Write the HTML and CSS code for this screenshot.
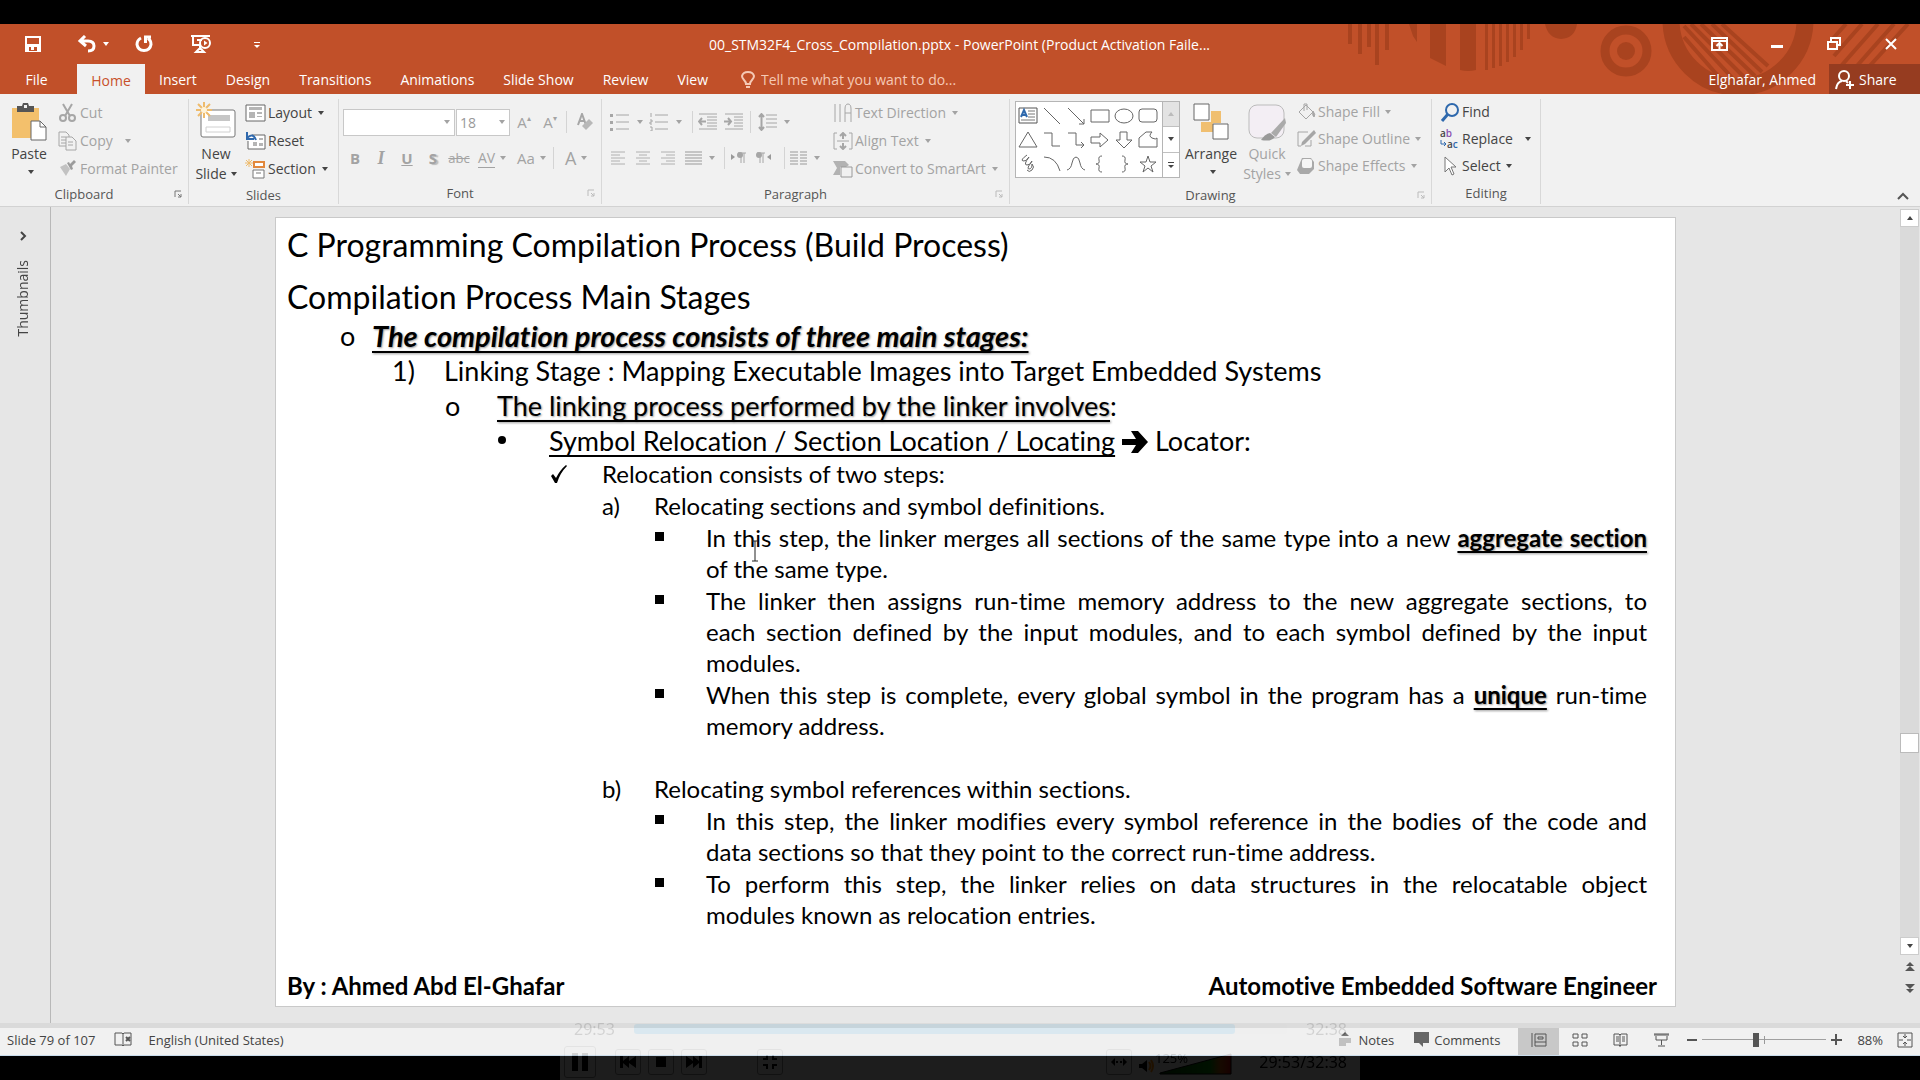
FILE: index.html
```html
<!DOCTYPE html>
<html lang="en">
<head>
<meta charset="utf-8">
<title>00_STM32F4_Cross_Compilation.pptx - PowerPoint</title>
<link rel="stylesheet" href="styles.css">
</head>
<body>
<header class="app-head">
  <svg class="deco" width="580" height="70" viewBox="1340 24 580 70" aria-hidden="true">
    <g fill="#a9431f">
      <path d="M1348 24h4v20h-4zM1358 24h4v30h-4zM1367 24h4v23h-4zM1375 24h4v41h-4zM1385 24h4v26h-4zM1409 24h8v18l-4-6zM1430 24h16v42l-16-8zM1460 24h16v46q-8 2-16 0z"/>
      <path d="M1485 24h3v46h-3zM1492 24h3v44h-3zM1499 24h3v42h-3zM1506 24h3v38h-3zM1513 24h3v33h-3zM1520 24h3v26h-3zM1527 24h3v15h-3z"/>
      <path d="M1545 24h32q-2 14-16 15-13-1-16-15z"/>
    </g>
    <circle cx="1626" cy="51" r="21" fill="none" stroke="#a9431f" stroke-width="9"/>
    <circle cx="1626" cy="51" r="9" fill="#a9431f"/>
    <circle cx="1738" cy="20" r="67" fill="none" stroke="#a9431f" stroke-width="17"/>
    <g stroke="#a9431f" stroke-width="4" fill="none">
      <path d="M1684 37l42 48M1684 26l54 58M1691 24l56 56M1701 24l54 52M1712 24l50 48M1722 24l46 42"/>
      <path d="M1846 24l-18 20M1862 24l-28 32M1878 24l-44 50M1894 24l-46 52M1908 24l-42 46"/>
    </g>
  </svg>
  <div class="title-bar">
    <div class="quick">
      <button class="qa q-save" aria-label="Save"><svg width="18" height="18" viewBox="0 0 18 18"><path d="M1 1h16v16H1z" fill="#fff"/><path d="M3 3h12v6H3zM5 12h8v4H5z" fill="#c15029"/><path d="M7 12h3v3H7z" fill="#fff"/></svg></button>
      <button class="qa q-undo" aria-label="Undo"><svg width="20" height="18" viewBox="0 0 20 18" fill="none" stroke="#fff" stroke-width="3"><path d="M8 1L3 6l6 5M3 6h8q6 0 6 5t-6 5"/></svg><i class="caret"></i></button>
      <button class="qa q-redo" aria-label="Repeat"><svg width="18" height="18" viewBox="0 0 18 18" fill="none" stroke="#fff" stroke-width="3"><path d="M6 3Q2 5 2 9.500q1 6 7 6t7-6q0-4-3-6.500"/><path d="M16 2h-5.500v6"/></svg></button>
      <button class="qa q-show" aria-label="Start from beginning"><svg width="22" height="20" viewBox="0 0 22 20" fill="none" stroke="#fff" stroke-width="2"><path d="M1 2h19M3 3v8h7M7 6h5M10 11v4M6 18l4-4 4 4z"/><circle cx="15" cy="9" r="5"/><path d="M14 6.500v5l3.500-2.500z" fill="#fff" stroke="none"/></svg></button>
      <button class="qa q-more" aria-label="Customize"><i class="caret line"></i></button>
    </div>
    <div class="doc-title">00_STM32F4_Cross_Compilation.pptx - PowerPoint (Product Activation Faile...</div>
    <div class="win">
      <button aria-label="Ribbon display options"><svg width="17" height="14" viewBox="0 0 17 14" fill="none" stroke="#fff" stroke-width="2"><path d="M1 1h15v12H1zM1 4h15M8.500 12V6M5.500 9l3-3 3 3"/></svg></button>
      <button aria-label="Minimize"><svg width="14" height="14" viewBox="0 0 14 14"><path d="M1 8h12v3H1z" fill="#fff"/></svg></button>
      <button aria-label="Restore"><svg width="14" height="14" viewBox="0 0 14 14" fill="none" stroke="#fff" stroke-width="2"><path d="M1 5h9v7H1zM4 4V1h9v7h-3"/></svg></button>
      <button aria-label="Close"><svg width="14" height="14" viewBox="0 0 14 14" stroke="#fff" stroke-width="2"><path d="M2 2l10 10M12 2L2 12"/></svg></button>
    </div>
  </div>
  <nav class="tabs">
    <button class="tab file">File</button>
    <button class="tab active">Home</button>
    <button class="tab">Insert</button>
    <button class="tab">Design</button>
    <button class="tab">Transitions</button>
    <button class="tab">Animations</button>
    <button class="tab">Slide Show</button>
    <button class="tab">Review</button>
    <button class="tab">View</button>
    <label class="tell"><svg width="14" height="18" viewBox="0 0 14 18" fill="none" stroke="#f5c9b5" stroke-width="2"><path d="M5 13q0-2-2-4-2-2-2-4 1-4 6-4t6 4q0 2-2 4t-2 4zM5 16h4"/></svg><input type="text" aria-label="Tell me" placeholder="Tell me what you want to do..."></label>
    <span class="account">Elghafar, Ahmed</span>
    <button class="share"><svg width="20" height="20" viewBox="0 0 20 20" fill="none" stroke="#fff" stroke-width="2"><circle cx="9" cy="6" r="5"/><path d="M1 19q1-7 6-8M11 11l2 2M15 11v8M11 15h8"/></svg>Share</button>
  </nav>
</header>

<section class="ribbon">
  <div class="group g-clip">
    <div class="body">
      <button class="big b-paste"><svg width="36" height="40" viewBox="0 0 36 40"><path d="M1 6h27v30H1z" fill="#f3c06c"/><path d="M6 4h5l1-3h5l1 3h5v6H6z" fill="#555"/><path d="M13 3h3v3h-3z" fill="#f1f1f1"/><path d="M20 19h9l6 6v13H20z" fill="#fff" stroke="#666"/><path d="M29 19v6h6" fill="none" stroke="#666"/></svg><span>Paste</span><i class="caret"></i></button>
      <div class="stack off">
        <button class="item"><svg width="20" height="20" viewBox="0 0 20 20" fill="none" stroke="#a6a6a6" stroke-width="2"><path d="M5 1l7 12M14 1L7 13"/><circle cx="5" cy="15" r="3"/><circle cx="14" cy="15" r="3"/></svg><span>Cut</span></button>
        <button class="item"><svg width="20" height="20" viewBox="0 0 20 20" fill="#f1f1f1" stroke="#a6a6a6" stroke-width="1"><path d="M1 1h7l3 3v11H1zM3 6h5M3 9h5M3 12h5"/><path d="M8 6h6l4 4v9H8z"/><path d="M10 11h5M10 14h5" /></svg><span>Copy</span><i class="caret far"></i></button>
        <button class="item"><svg width="20" height="20" viewBox="0 0 20 20"><path d="M2 8l6-3 4 5-4 7z" fill="#c2c2c2"/><path d="M9 4l2-1 1 2 4-4 2 2-4 4 1 3-2 1z" fill="#9c9c9c"/></svg><span>Format Painter</span></button>
      </div>
    </div>
    <div class="label has-launch">Clipboard<svg class="launch" width="8" height="8" viewBox="0 0 8 8"><use href="#launch"/></svg></div>
  </div>

  <div class="group g-slides">
    <div class="body">
      <button class="big b-new"><svg width="40" height="40" viewBox="0 0 40 40"><rect x="5" y="8" width="34" height="27" rx="2" fill="#fff" stroke="#777"/><path d="M12 13h22v6H12z" fill="#c6c6c6"/><path d="M10 25h24v5H10z" fill="none" stroke="#d0d0d0"/><path d="M8 0v16M0 8h16M2 2l12 12M14 2L2 14" stroke="#eebb6c" stroke-width="2"/><circle cx="8" cy="8" r="3" fill="#fff3d8"/></svg><span>New</span><span>Slide<i class="caret"></i></span></button>
      <div class="stack">
        <button class="item"><svg width="21" height="18" viewBox="0 0 21 18"><path d="M1 1h19v16H1z" fill="#fff" stroke="#666"/><path d="M4 3h13v3H4zM4 8h6v6H4zM12 8h5v2h-5zM12 12h5v1h-5z" fill="#b5b5b5"/></svg><span>Layout</span><i class="caret"></i></button>
        <button class="item"><svg width="21" height="18" viewBox="0 0 21 18"><path d="M7 3h13v14H3V9" fill="#fff" stroke="#666"/><path d="M8 10h4v4H8zM14 6h4v2h-4zM14 11h4v3h-4z" fill="#b5b5b5"/><path d="M2 0v7h7M2 6q6-6 9 2" fill="none" stroke="#2f69ad" stroke-width="2"/></svg><span>Reset</span></button>
        <button class="item"><svg width="21" height="20" viewBox="0 0 21 20"><path d="M9 3h10v5H9z" fill="#fff" stroke="#e2883c" stroke-width="2"/><path d="M8 11h11v8H8zM11 14h5" fill="#fff" stroke="#777"/><path d="M4 0v8M0 4h8M1 1l6 6M7 1L1 7" stroke="#eebb6c"/></svg><span>Section</span><i class="caret"></i></button>
      </div>
    </div>
    <div class="label">Slides</div>
  </div>

  <div class="group g-font off">
    <div class="body two">
      <div class="tools">
        <span class="combo font-name"><input type="text" aria-label="Font"><i class="caret"></i></span>
        <span class="combo font-size"><input type="text" aria-label="Font size" value="18"><i class="caret"></i></span>
        <button class="t c" aria-label="Grow font">A<sup>▴</sup></button>
        <button class="t c" aria-label="Shrink font">A<sup>▾</sup></button>
        <i class="bar"></i>
        <button class="t c" aria-label="Clear formatting"><svg width="17" height="18" viewBox="0 0 17 18"><path d="M1 12L5 1l4 11M3 8h5" fill="none" stroke="#a6a6a6" stroke-width="2"/><path d="M12 6l4 4-7 7-4-4z" fill="#b8b8b8"/></svg></button>
      </div>
      <div class="tools">
        <button class="t c"><b>B</b></button><button class="t c"><em>I</em></button><button class="t c"><b><u>U</u></b></button><button class="t c"><b class="sh">S</b></button><button class="t c"><s>abc</s></button>
        <button class="t cc av"><span>AV</span><i class="caret"></i></button><button class="t cc"><span>Aa</span><i class="caret"></i></button>
        <i class="bar"></i>
        <button class="t cc big-a"><span>A</span><i class="caret"></i></button>
      </div>
    </div>
    <div class="label has-launch">Font<svg class="launch" width="8" height="8" viewBox="0 0 8 8"><use href="#launch"/></svg></div>
  </div>

  <div class="group g-para off">
    <div class="body">
      <div class="para-tools">
        <div class="tools">
          <button class="t w" aria-label="Bullets"><svg width="20" height="18" viewBox="0 0 20 18"><path d="M6 2h13M6 9h13M6 16h13" stroke="#a6a6a6"/><path d="M0 1h3v3H0zM0 8h3v3H0zM0 15h3v3H0z" fill="#a6a6a6"/></svg><i class="caret"></i></button>
          <button class="t w" aria-label="Numbering"><svg width="20" height="18" viewBox="0 0 20 18"><path d="M6 2h13M6 9h13M6 16h13M2 0v4M1 7h2v2H1v2h2M1 14h2v4H1" stroke="#a6a6a6" fill="none"/></svg><i class="caret"></i></button>
          <i class="bar"></i>
          <button class="t" aria-label="Decrease indent"><svg width="19" height="18" viewBox="0 0 19 18" fill="none" stroke="#a6a6a6"><path d="M1 1h18M9 4h10M9 7h10M9 10h10M9 13h10M1 16h18"/><path d="M8 8.500H1M4 5L1 8.500 4 12" stroke-width="2"/></svg></button>
          <button class="t" aria-label="Increase indent"><svg width="19" height="18" viewBox="0 0 19 18" fill="none" stroke="#a6a6a6"><path d="M1 1h18M10 4h9M10 7h9M10 10h9M10 13h9M1 16h18"/><path d="M0 8.500h7M4 5l3 3.500L4 12" stroke-width="2"/></svg></button>
          <i class="bar near"></i>
          <button class="t w" aria-label="Line spacing"><svg width="19" height="18" viewBox="0 0 19 18" fill="none" stroke="#a6a6a6"><path d="M8 2h11M8 6h11M8 10h11M8 14h11" stroke-width="1"/><path d="M3.500 1v16M1 4l2.500-3L6 4M1 14l2.500 3L6 14" stroke-width="2"/></svg><i class="caret"></i></button>
        </div>
        <div class="tools">
          <button class="t" aria-label="Align left"><svg width="17" height="14" viewBox="0 0 17 14"><path d="M1 1h14M1 4h9M1 7h14M1 10h9M1 13h14" stroke="#b0b0b0"/></svg></button>
          <button class="t" aria-label="Center"><svg width="17" height="14" viewBox="0 0 17 14"><path d="M1 1h14M4 4h8M1 7h14M4 10h8M1 13h14" stroke="#b0b0b0"/></svg></button>
          <button class="t" aria-label="Align right"><svg width="17" height="14" viewBox="0 0 17 14"><path d="M1 1h14M6 4h9M1 7h14M6 10h9M1 13h14" stroke="#b0b0b0"/></svg></button>
          <button class="t w" aria-label="Justify"><svg width="17" height="14" viewBox="0 0 17 14"><path d="M0 1h17M0 4h17M0 7h17M0 10h17M0 13h17" stroke="#999"/></svg><i class="caret"></i></button>
          <i class="bar short"></i>
          <button class="t" aria-label="Left to right"><svg width="17" height="12" viewBox="0 0 17 12"><path d="M1 2l4 3-4 3z" fill="#999"/><path d="M11 1v10M14 1v10M8 1h8" stroke="#a6a6a6"/><circle cx="10" cy="3" r="3" fill="#a6a6a6"/></svg></button>
          <button class="t" aria-label="Right to left"><svg width="17" height="12" viewBox="0 0 17 12"><path d="M16 2l-4 3 4 3z" fill="#999"/><path d="M5 1v10M8 1v10M2 1h8" stroke="#a6a6a6"/><circle cx="4" cy="3" r="3" fill="#a6a6a6"/></svg></button>
          <i class="bar"></i>
          <button class="t w" aria-label="Columns"><svg width="17" height="14" viewBox="0 0 17 14"><path d="M0 1h8M0 4h8M0 7h8M0 10h8M0 13h8M10 1h7M10 4h7M10 7h7M10 10h7M10 13h7" stroke="#999"/></svg><i class="caret"></i></button>
        </div>
      </div>
      <div class="stack">
        <button class="item"><svg width="20" height="20" viewBox="0 0 20 20" fill="none" stroke="#a6a6a6"><path d="M2 1v18M7 1v18M12 19V6q0-5 3-5t3 5v13M12 10h6" stroke-width="1"/></svg><span>Text Direction</span><i class="caret"></i></button>
        <button class="item"><svg width="20" height="18" viewBox="0 0 20 18" fill="none" stroke="#a6a6a6"><path d="M4 1H1v16h3M16 1h3v16h-3M4 9h12"/><path d="M10 1v6M7 4l3-3 3 3M10 17v-6M7 14l3 3 3-3" stroke-width="2"/></svg><span>Align Text</span><i class="caret"></i></button>
        <button class="item"><svg width="20" height="18" viewBox="0 0 20 18"><path d="M0 1h12l4 4-3 2H7v8H0l4-7z" fill="#b2b2b2"/><path d="M8 7h11v10H8z" fill="#f1f1f1" stroke="#999"/></svg><span>Convert to SmartArt</span><i class="caret"></i></button>
      </div>
    </div>
    <div class="label has-launch">Paragraph<svg class="launch" width="8" height="8" viewBox="0 0 8 8"><use href="#launch"/></svg></div>
  </div>

  <div class="group g-draw">
    <div class="body">
      <div class="gallery">
        <div class="shapes">
          <svg viewBox="0 0 24 24"><path d="M3 4h18v15H3z" fill="#fff" stroke="#555"/><path d="M5 13l3-7 3 7M6 11h4" fill="none" stroke="#2f69ad" stroke-width="2"/><path d="M12 7h7M12 10h7M12 13h7M5 16h14" stroke="#777"/></svg>
          <svg viewBox="0 0 24 24"><path d="M4 4l16 16"/></svg>
          <svg viewBox="0 0 24 24"><path d="M4 4l16 16M20 15v5h-5"/></svg>
          <svg viewBox="0 0 24 24"><path d="M3 6h18v12H3z"/></svg>
          <svg viewBox="0 0 24 24"><ellipse cx="12" cy="12" rx="9" ry="7"/></svg>
          <svg viewBox="0 0 24 24"><rect x="3" y="5" width="18" height="13" rx="3"/></svg>
          <svg viewBox="0 0 24 24"><path d="M12 4l9 15H3z"/></svg>
          <svg viewBox="0 0 24 24"><path d="M4 5h8v13h8"/></svg>
          <svg viewBox="0 0 24 24"><path d="M4 5h8v12h8M17 14l3 3-3 3"/></svg>
          <svg viewBox="0 0 24 24"><path d="M3 9h9V5l8 7-8 7v-4H3z"/></svg>
          <svg viewBox="0 0 24 24"><path d="M8 4h7v8h5l-8 8-8-8h4z"/></svg>
          <svg viewBox="0 0 24 24"><path d="M3 19V10l7-6h6q-4 4 0 6t5 0v9z"/></svg>
          <svg viewBox="0 0 24 24"><path d="M11 3q-7 5-4 6t6-4q-6 8-2 8t5-4q-6 8-3 8t3-5q3 3 0 6t-5 0"/></svg>
          <svg viewBox="0 0 24 24"><path d="M4 5q12 0 16 14"/></svg>
          <svg viewBox="0 0 24 24"><path d="M3 18q4-1 5-7t4-6 4 6 5 7"/></svg>
          <svg viewBox="0 0 24 24"><path d="M14 4q-4 0-3 4t-3 4q4 0 3 4t3 4"/></svg>
          <svg viewBox="0 0 24 24"><path d="M10 4q4 0 3 4t3 4q-4 0-3 4t-3 4"/></svg>
          <svg viewBox="0 0 24 24"><path d="M12 4l2 6h6l-5 4 2 6-5-4-5 4 2-6-5-4h6z"/></svg>
        </div>
        <div class="gal-scroll"><button class="dim" aria-label="Previous"><i class="caret up"></i></button><button aria-label="Next"><i class="caret"></i></button><button aria-label="More"><i class="caret line"></i></button></div>
      </div>
      <button class="big b-arr"><svg width="36" height="40" viewBox="0 0 36 40"><path d="M18 9h10v12H18zM8 20h12v10H8z" fill="#f0bf70"/><path d="M1 2h15v16H1zM20 22h15v15H20z" fill="#fff" stroke="#666"/></svg><span>Arrange</span><i class="caret"></i></button>
      <button class="big b-quick off"><svg width="38" height="40" viewBox="0 0 38 40"><rect x="1" y="3" width="35" height="33" rx="8" fill="#f3eef4" stroke="#bbb"/><path d="M37 16L23 31l5 4 10-14z" fill="#aaa"/><path d="M22 31q-5 1-9 7 10 2 14-3z" fill="#999"/></svg><span>Quick</span><span>Styles<i class="caret"></i></span></button>
      <div class="stack tight off">
        <button class="item"><svg width="20" height="18" viewBox="0 0 20 18" fill="none" stroke="#a6a6a6"><path d="M10 2l7 7-7 7-7-7zM8 8V1h3v6"/><path d="M17 8q3 4 1 6-2-1-1-6" fill="#a6a6a6"/></svg><span>Shape Fill</span><i class="caret"></i></button>
        <button class="item"><svg width="20" height="18" viewBox="0 0 20 18"><path d="M12 2H2v14h3M15 10v6H9" fill="none" stroke="#a6a6a6"/><path d="M18 0l2 3-11 11-4 2 1-4z" fill="#a6a6a6"/></svg><span>Shape Outline</span><i class="caret"></i></button>
        <button class="item"><svg width="20" height="18" viewBox="0 0 20 18"><path d="M6 1h9l3 4v7l-5 5H4l-3-4z" fill="#a9a9a9"/><rect x="6" y="2" width="10" height="9" rx="2" fill="#f6f6f6"/></svg><span>Shape Effects</span><i class="caret"></i></button>
      </div>
    </div>
    <div class="label has-launch">Drawing<svg class="launch pale" width="8" height="8" viewBox="0 0 8 8"><use href="#launch"/></svg></div>
  </div>

  <div class="group g-edit">
    <div class="body">
      <div class="stack tight">
        <button class="item"><svg width="20" height="20" viewBox="0 0 20 20" fill="none" stroke="#2f69ad" stroke-width="2"><circle cx="12" cy="8" r="6"/><path d="M8 12l-6 7" stroke-width="3"/></svg><span>Find</span></button>
        <button class="item"><span class="abac"><span>a<q>b</q></span><span class="ac"><svg width="7" height="8" viewBox="0 0 7 8"><path d="M1 0v4h5M4 2l2 2-2 2" fill="none" stroke="#2f69ad"/></svg>a<q>c</q></span></span><span>Replace</span><i class="caret far"></i></button>
        <button class="item"><svg width="20" height="20" viewBox="0 0 20 20"><path d="M5 1v15l4-4 3 7 2-1-3-7h5z" fill="#fff" stroke="#777"/></svg><span>Select</span><i class="caret"></i></button>
      </div>
    </div>
    <div class="label">Editing</div>
  </div>
  <button class="collapse" aria-label="Collapse ribbon"><svg width="12" height="8" viewBox="0 0 12 8"><path d="M1 7l5-5 5 5" fill="none" stroke="#555" stroke-width="2"/></svg></button>
</section>

<main class="work">
  <aside class="thumbs"><button aria-label="Show thumbnails"><svg width="8" height="12" viewBox="0 0 8 12"><path d="M2 2l4 4-4 4" fill="none" stroke="#444" stroke-width="2"/></svg></button><span>Thumbnails</span></aside>
  <div class="canvas">
    <article class="slide">
      <h1>C Programming Compilation Process (Build Process)</h1>
      <h1>Compilation Process Main Stages</h1>
      <div class="row big-row l1"><span class="mk ring">o</span><p class="strong shadow"><u>The compilation process consists of three main stages:</u></p></div>
      <div class="row big-row l2"><span class="mk">1)</span><p>Linking Stage : Mapping Executable Images into Target Embedded Systems</p></div>
      <div class="row big-row l3"><span class="mk ring">o</span><p><u class="shadow">The linking process performed by the linker involves</u>:</p></div>
      <div class="row big-row l4"><span class="mk dot"></span><p><u>Symbol Relocation / Section Location / Locating</u> <svg class="arrow" width="26" height="26" viewBox="0 0 26 26"><path d="M0 10h14L9 2h7l10 11-10 11H9l5-8H0z"/></svg> Locator:</p></div>
      <div class="notes">
        <div class="row l5 first"><span class="mk"><svg width="18" height="18" viewBox="0 0 18 18"><path d="M1 11l2-2 3 4Q10 5 16 0l1 1Q10 8 7 18H5z"/></svg></span><p>Relocation consists of two steps:</p></div>
        <div class="row l6"><span class="mk">a)</span><p>Relocating sections and symbol definitions.</p></div>
        <div class="row l7"><span class="mk sq"></span><p>In this step, the linker merges all sections of the same type into a new <b><u class="shadow">aggregate section</u></b> of the same type.
          <svg class="ibeam" width="8" height="22" viewBox="0 0 8 22"><path d="M1 1h6M1 21h6M4 1v20" stroke="#222" fill="none"/></svg></p></div>
        <div class="row l7"><span class="mk sq"></span><p>The linker then assigns run-time memory address to the new aggregate sections, to each&nbsp;section defined by the input modules, and to each symbol defined by the input modules.</p></div>
        <div class="row l7"><span class="mk sq"></span><p>When this step is complete, every global symbol in the program has a <b><u class="shadow">unique</u></b> run-time memory address.</p></div>
        <div class="row l6 after-gap"><span class="mk">b)</span><p>Relocating symbol references within sections.</p></div>
        <div class="row l7"><span class="mk sq"></span><p>In this step, the linker modifies every symbol reference in the bodies of the code and data&nbsp;sections so that they point to the correct run-time address.</p></div>
        <div class="row l7"><span class="mk sq"></span><p>To perform this step, the linker relies on data structures in the relocatable object modules&nbsp;known as relocation entries.</p></div>
      </div>
      <footer><span>By : Ahmed Abd El-Ghafar</span><span>Automotive Embedded Software Engineer</span></footer>
    </article>
  </div>
  <div class="scroll">
    <button class="end" aria-label="Scroll up"><i class="caret up"></i></button>
    <div class="track"><div class="thumb"></div></div>
    <button class="end" aria-label="Scroll down"><i class="caret"></i></button>
    <button aria-label="Previous slide"><svg width="10" height="10" viewBox="0 0 10 10"><path d="M5 0l4 4H1zM5 4l5 5H0z" fill="#555"/></svg></button>
    <button aria-label="Next slide"><svg width="10" height="10" viewBox="0 0 10 10"><path d="M5 10L1 6h8zM5 6L0 1h10z" fill="#555"/></svg></button>
  </div>
</main>

<footer class="status">
  <span class="s-slide">Slide 79 of 107</span>
  <button class="s-spell" aria-label="Spelling"><svg width="18" height="15" viewBox="0 0 18 15" fill="none" stroke="#555"><path d="M1 1h7l1 1 1-1h7v12h-7l-1 1-1-1H1zM9 2v12"/><path d="M12 5l4 4M16 5l-4 4" stroke-width="2"/></svg></button>
  <span>English (United States)</span>
  <div class="s-right">
    <button class="s-notes"><svg width="14" height="15" viewBox="0 0 14 15"><path d="M7 0l4 4H3z" fill="#666"/><path d="M1 6h12v5H8v3H1z" fill="#bbb"/></svg>Notes</button>
    <button class="s-comm"><svg width="15" height="15" viewBox="0 0 15 15"><path d="M0 0h15v11H9v4l-4-4H0z" fill="#666"/></svg>Comments</button>
    <button class="view on" aria-label="Normal"><svg width="16" height="14" viewBox="0 0 16 14" fill="none" stroke="#555"><path d="M1 0v14M4 1h11v12H4M4 1v12M4 9h11M7 4h5v2H7z"/></svg></button>
    <button class="view" aria-label="Slide sorter"><svg width="16" height="14" viewBox="0 0 16 14" fill="none" stroke="#555"><path d="M1 1h5v4H1zM10 1h5v4h-5zM1 9h5v4H1zM10 9h5v4h-5z"/></svg></button>
    <button class="view" aria-label="Reading view"><svg width="15" height="14" viewBox="0 0 15 14" fill="none" stroke="#555"><path d="M1 1h5l1 1 1-1h6v11H8l-1 1-1-1H1zM7 2v12M3 4h3M3 6h3M3 8h3M9 4h3M9 6h3M9 8h3"/></svg></button>
    <button class="view" aria-label="Slide show"><svg width="15" height="14" viewBox="0 0 15 14" fill="none" stroke="#555"><path d="M0 1h15M0 2h15M2 3v4h11V3M7.500 7v5M4 13h7"/></svg></button>
    <button class="zoom-b" aria-label="Zoom out"><svg width="10" height="11" viewBox="0 0 10 11"><path d="M0 5h10v2H0z" fill="#555"/></svg></button>
    <input class="zoom" type="range" min="0" max="100" value="43" aria-label="Zoom">
    <button class="zoom-b" aria-label="Zoom in"><svg width="11" height="11" viewBox="0 0 11 11"><path d="M0 5h4V0h2v5h5v2H6v4H4V7H0z" fill="#555"/></svg></button>
    <span class="pct">88%</span>
    <button class="fit" aria-label="Fit to window"><svg width="16" height="16" viewBox="0 0 16 16" fill="none" stroke="#555"><path d="M1 1h14v14H1zM8 2v4M8 14v-4M2 8h4M14 8h-4M6 4l2 2 2-2M6 12l2-2 2 2"/></svg></button>
  </div>
</footer>

<div class="player">
  <div class="seek"><span>29:53</span><div class="seek-bar"><div class="seek-done" style="width:92%"></div></div><span>32:38</span></div>
  <div class="controls">
    <button class="pause" aria-label="Pause"><svg width="16" height="18" viewBox="0 0 16 18"><path d="M0 0h6v18H0zM10 0h6v18h-6z"/></svg></button>
    <button class="pl p1" aria-label="Previous"><svg width="16" height="12" viewBox="0 0 16 12"><path d="M0 0h3v5l6-5v5l7-5v12L9 7v5L3 7v5H0z"/></svg></button>
    <button class="pl" aria-label="Stop"><svg width="10" height="10" viewBox="0 0 10 10"><path d="M0 0h10v10H0z"/></svg></button>
    <button class="pl" aria-label="Next"><svg width="16" height="12" viewBox="0 0 16 12"><path d="M16 0h-3v5L7 0v5L0 0v12l7-5v5l6-5v5h3z"/></svg></button>
    <button class="pl p2" aria-label="Exit full screen"><svg width="14" height="14" viewBox="0 0 14 14" fill="none" stroke="#000" stroke-width="2"><path d="M4 0v4H0M10 0v4h4M4 14v-4H0M10 14v-4h4"/></svg></button>
    <button class="pl p3" aria-label="More"><svg width="16" height="8" viewBox="0 0 16 8"><path d="M0 4l4-4v8zM16 4l-4-4v8zM5 3h2v2H5zM9 3h2v2H9z"/></svg></button>
    <svg class="vol" width="96" height="24" viewBox="0 0 96 24"><defs><linearGradient id="vg"><stop offset="0" stop-color="#004000"/><stop offset=".7" stop-color="#008a00"/><stop offset=".85" stop-color="#b05000"/><stop offset="1" stop-color="#c00000"/></linearGradient></defs><path d="M0 12h3l5-4v12l-5-4H0z" fill="#000"/><path d="M10 10q3 4 0 8M12 8q4 6 0 12" stroke="#f80" fill="none" stroke-width="2"/><path d="M21 21L92 2v20H21z" fill="url(#vg)" stroke="#000"/></svg>
    <span class="vol-t">125%</span>
    <span class="clock">29:53/32:38</span>
  </div>
</div>

<svg class="defs" width="0" height="0"><defs><g id="launch" fill="none" stroke="currentColor"><path d="M1 7V1h6M4 7h3V4M4 4l3 3"/></g></defs></svg>
</body>
</html>
```
FILE: styles.css
```css
* { box-sizing: border-box; }
body {
  margin: 0;
  min-height: 100vh;
  padding: 24px 0;
  display: flex;
  flex-direction: column;
  position: relative;
  background: #000;
  color: #444;
  font: 14px/20px "Open Sans", "Noto Sans", sans-serif;
}
button {
  margin: 0;
  padding: 0;
  border: 0;
  background: none;
  color: inherit;
  font: inherit;
  white-space: nowrap;
}
button, .item, .tools { display: flex; align-items: center; }
svg { flex: none; }
.defs { position: absolute; }

.caret {
  flex: none;
  display: inline-block;
  border: 3px solid transparent;
  border-top: 4px solid currentColor;
  border-bottom: 0;
  margin-left: 6px;
}
.caret.far { margin-left: 12px; }
.caret.up { border-bottom: 4px solid currentColor; border-top: 0; }
.caret.line { border-top-width: 3px; position: relative; margin: 4px 0 0; }
.caret.line::before { content: ""; position: absolute; left: -3px; top: -6px; width: 6px; height: 1px; background: currentColor; }

/* Title bar and tabs */
.app-head { position: relative; background: #c15029; color: #fff; }
.deco { position: absolute; right: 0; top: 0; }
.title-bar { position: relative; height: 40px; display: flex; align-items: center; justify-content: space-between; }
.quick { display: flex; flex: 1; }
.qa { height: 38px; }
.q-save { margin-left: 24px; }
.q-undo { margin-left: 35px; }
.q-redo { margin-left: 26px; }
.q-show { margin-left: 37px; }
.q-more { margin-left: 42px; }
.doc-title { font-size: 14px; padding-top: 1px; }
.win { flex: 1; display: flex; justify-content: flex-end; padding-right: 1px; }
.win button { width: 57px; height: 38px; justify-content: center; }
.tabs { position: relative; display: flex; height: 30px; }
.tab { padding: 2px 15px 0 14px; }
.tab.file { width: 77px; justify-content: center; padding: 2px 4px 0 0; }
.tab.active { background: #f1f1f1; color: #c8502a; height: 31px; width: 68px; justify-content: center; padding: 2px 0 0; }
.tell { display: flex; align-items: center; flex: 1; padding: 2px 0 0 18px; gap: 6px; }
.tell input { flex: 1; border: 0; background: none; font: inherit; color: #fff; padding: 0; outline: 0; }
.tell input::placeholder { color: #f5c9b5; opacity: 1; }
.account { align-self: center; margin-right: 13px; padding-top: 2px; }
.share { background: #963c20; width: 91px; padding: 2px 0 0 6px; gap: 4px; }

/* Ribbon */
.ribbon { display: flex; background: #f1f1f1; border-bottom: 1px solid #d2d2d2; padding: 5px 0 2px; position: relative; }
.group { flex: none; display: flex; flex-direction: column; border-right: 1px solid #d8d8d8; height: 105px; }
.body { display: flex; height: 88px; }
.label { position: relative; text-align: center; font-size: 13px; line-height: 22px; color: #555; }
.label.has-launch { padding-right: 20px; }
.launch { position: absolute; right: 6px; top: 7px; color: #777; }
.off .launch, .launch.pale { color: #bbb; }
.off { color: #a3a3a3; }
.off .label { color: #555; }
.g-clip { width: 189px; }
.g-slides { width: 150px; }
.g-font { width: 263px; }
.g-para { width: 408px; }
.g-draw { width: 422px; }
.g-edit { width: 109px; }
.big { flex-direction: column; padding-top: 3px; }
.big > span { display: flex; align-items: center; line-height: 20px; }
.big > svg + span { margin-top: 2px; }
.big > .caret { margin: 6px 0 0; }
.big .caret { margin-left: 4px; }
.b-paste { width: 58px; }
.b-new { width: 56px; padding-right: 2px; }
.b-arr { width: 62px; }
.b-quick { width: 50px; }
.stack .item { height: 28px; gap: 2px; }
.stack .item .caret { margin-left: 4px; }
.stack .item .caret.far { margin-left: 10px; }
.stack.tight .item { height: 27px; }
.stack.tight { margin-top: -1px; }
.stack.tight .item .caret { margin-left: 3px; }
.g-edit .stack { padding-left: 8px; }
.g-edit .stack .item .caret.far { margin-left: 10px; }
.b-quick + .stack { padding-left: 4px; }

.body.two, .para-tools { flex-direction: column; padding-top: 9px; gap: 8px; display: flex; }
.tools { height: 28px; }
.g-font .tools { padding-left: 3px; }
.g-font .tools:first-child { padding-left: 4px; }
.combo { display: flex; align-items: center; height: 27px; border: 1px solid #c8c8c8; background: #fff; margin-right: 1px; }
.combo input { flex: 1; width: 0; height: 25px; border: 0; padding: 0 3px; font: inherit; color: #999; background: none; }
.combo .caret { margin: 0; }
.font-name { width: 112px; padding-right: 4px; }
.font-size { width: 54px; padding-right: 4px; }
.t { width: 26px; height: 28px; }
.t.c { justify-content: center; }
.t.w, .t.cc { width: 39px; }
.t.cc .caret { margin-left: 5px; }
.t.cc { padding-left: 6px; }
.t .caret { margin-left: 7px; }
.t sup { font-size: 8px; align-self: flex-start; }
.g-font .t { font-size: 15px; }
.t em { font-family: "Liberation Serif", serif; font-weight: bold; font-size: 18px; }
.t s { font-size: 13px; }
.av span { border-bottom: 1px solid #a3a3a3; line-height: 18px; font-size: 14px; }
.big-a span { font-size: 18px; }
.sh { text-shadow: 2px 1px 1px #bbb; }
.bar { width: 1px; height: 22px; background: #d4d4d4; margin: 0 5px 0 3px; }
.para-tools { width: 226px; padding-left: 8px; flex: none; }
.para-tools .bar { margin: 0 5px 0 4px; }
.para-tools .bar.near { margin: 0 7px 0 0; }
.para-tools .bar.short { margin: 0 5px 0 1px; }
.g-para .stack { padding-left: 5px; }

.gallery { display: flex; margin: 2px 0 0 5px; height: 77px; width: 165px; border: 1px solid #b5b5b5; background: #fff; flex: none; }
.shapes { flex: 1; display: grid; grid-template-columns: repeat(6, 24px); grid-auto-rows: 24px; padding-top: 2px; }
.shapes svg { width: 24px; height: 24px; fill: none; stroke: #666; }
.gal-scroll { width: 17px; display: flex; flex-direction: column; border-left: 1px solid #b5b5b5; }
.gal-scroll button { flex: 1; justify-content: center; border-top: 1px solid #c0c0c0; }
.gal-scroll .caret { margin-left: 0; }
.gal-scroll .dim { background: #e3e3e3; color: #bbb; border-top: 0; }
.abac { width: 20px; font-size: 10px; line-height: 11px; display: flex; flex-direction: column; font-weight: 600; }
.abac span { display: flex; align-items: center; }
.abac q { quotes: none; color: #8a4fb0; }
.abac .ac q { color: #2f69ad; }
.collapse { position: absolute; right: 11px; bottom: 6px; }

/* Work area */
.work { flex: 1; display: flex; background: #e6e6e6; border-bottom: 5px solid #dadada; }
.thumbs { width: 51px; border-right: 1px solid #b8b8b8; display: flex; flex-direction: column; align-items: center; padding: 23px 4px 0 0; gap: 18px; }
.thumbs span { writing-mode: vertical-rl; transform: rotate(180deg); font-size: 14px; }
.canvas { flex: 1; display: flex; padding: 10px 224px 16px; }
.slide {
  flex: 1;
  display: flex;
  flex-direction: column;
  background: #fff;
  border: 1px solid #c9c9c9;
  padding: 4px 28px 3px 11px;
  color: #000;
  font-family: Lato, "Open Sans", sans-serif;
  font-variant-ligatures: none;
}
.slide h1 { margin: 0; font-weight: 400; font-size: 32px; line-height: 46px; }
.slide h1 + h1 { line-height: 42px; margin-top: 8px; }
.slide p { margin: 0; flex: 1; text-align: justify; position: relative; }
.row { display: flex; font-size: 24px; line-height: 31px; }
.big-row { font-size: 27px; line-height: 35px; }
.mk { flex: none; width: 52px; }
.l1 { margin-left: 53px; }
.l1 .mk { width: 32px; }
.l2 { margin-left: 105px; }
.l3 { margin-left: 158px; }
.l4 { margin-left: 210px; }
.l5 { margin-left: 263px; }
.l6 { margin-left: 315px; }
.l7 { margin-left: 367px; }
.strong { font-weight: 700; font-style: italic; font-size: 29px; }
.shadow { text-shadow: 1px 1px 2px #999; }
.slide u { text-decoration-thickness: 2px; text-underline-offset: 4px; text-decoration-skip-ink: none; }
.arrow { vertical-align: -4px; }
.sq::before { content: ""; display: block; width: 9px; height: 9px; margin: 10px 0 0 1px; background: #000; }
.dot::before { content: ""; display: block; width: 8px; height: 8px; border-radius: 4px; margin: 13px 0 0 1px; background: #000; }
.notes { display: flex; flex-direction: column; gap: 1px; }
.after-gap { margin-top: 31px; }
.ibeam { position: absolute; left: 45px; top: 18px; }
.slide footer { margin-top: auto; margin-right: -10px; display: flex; justify-content: space-between; font-size: 24px; font-weight: 700; line-height: 34px; }

.scroll { width: 20px; padding: 2px 1px 25px 0; display: flex; flex-direction: column; }
.scroll button { height: 21px; justify-content: center; }
.scroll .end { height: 18px; background: #fff; border: 1px solid #ccc; }
.scroll .end + button { margin-top: 1px; }
.scroll .caret { margin-left: 0; }
.track { flex: 1; background: #dadada; display: flex; flex-direction: column; justify-content: flex-start; }
.thumb { height: 20px; margin-top: 506px; background: #fff; border: 1px solid #bbb; }

/* Status bar */
.status { height: 28px; background: #f1f1f1; border-bottom: 1px solid #c9dcec; display: flex; align-items: center; font-size: 13px; padding: 0 7px 4px; }
.s-spell { margin: 0 16px 0 19px; }
.s-right { margin: 0 0 -4px auto; display: flex; align-items: center; align-self: stretch; }
.s-right button { height: 27px; padding-bottom: 4px; }
.s-notes { gap: 6px; margin-right: 20px; }
.s-comm { gap: 5px; margin-right: 18px; }
.view { width: 41px; justify-content: center; }
.view.on { background: #c8c8c8; }
.zoom-b { margin: 0 5px; }
.zoom {
  appearance: none;
  width: 124px;
  height: 14px;
  margin: 0 0 4px;
  background: linear-gradient(#999, #999) 62px 50% / 1px 8px no-repeat, linear-gradient(#a0a0a0, #a0a0a0) 0 50% / 100% 1px no-repeat;
}
.zoom::-webkit-slider-thumb { appearance: none; width: 6px; height: 14px; background: #555; }
.pct { margin: 0 14px 4px 10px; }

/* Media player overlay */
.player {
  position: absolute;
  left: 560px;
  bottom: 0;
  width: 800px;
  height: 72px;
  background: #eee;
  opacity: .12;
  color: #000;
  font: 16px/20px "Noto Sans", sans-serif;
}
.seek { display: flex; align-items: center; padding: 8px 13px 0 14px; gap: 19px; height: 34px; }
.seek-bar { flex: 1; height: 10px; background: #e4e4e4; border-radius: 3px; }
.seek-done { height: 10px; background: #3daee9; border-radius: 3px; }
.controls { display: flex; align-items: center; padding-left: 4px; height: 40px; }
.controls button { justify-content: center; border: 1px solid #888; border-radius: 3px; }
.pause { width: 32px; height: 32px; }
.pl { width: 26px; height: 26px; margin-right: 7px; }
.p1 { margin-left: 19px; }
.p2 { margin-left: 43px; }
.p3 { margin-left: 316px; }
.vol { margin-top: 4px; }
.vol-t { font-size: 13px; margin: -8px 0 0 -80px; }
.clock { margin: 0 13px 0 auto; }
```
